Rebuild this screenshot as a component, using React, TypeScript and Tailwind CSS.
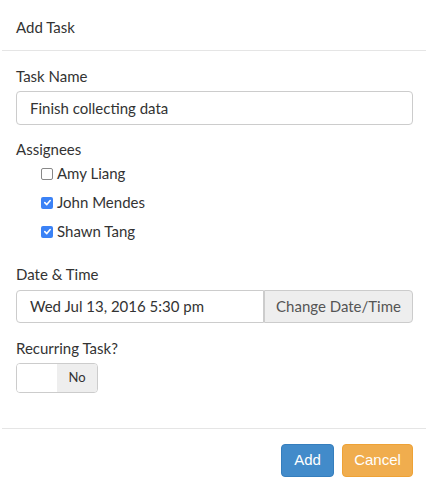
export default function App() {
  return (
    <div className="w-[426px] h-[494px] bg-white text-[#333] font-['Lato','Open_Sans',sans-serif] text-[15px]">
      <div className="h-[51px] pl-4 flex items-center border-b border-[#e5e5e5] ml-[2px]">
        <span className="-ml-[2px] pt-[4px]">Add Task</span>
      </div>

      <div className="px-4 pt-[15px]">
        <div className="mb-[5px] leading-[20px]">Task Name</div>
        <div className="h-[34px] w-[397px] border border-[#ccc] rounded-[4px] flex items-center px-[13px]">
          Finish collecting data
        </div>

        <div className="mt-[14px] leading-[20px]">Assignees</div>
        <div className="pl-[25px] flex flex-col">
          <Check label="Amy Liang" />
          <Check label="John Mendes" checked />
          <Check label="Shawn Tang" checked />
        </div>

        <div className="mt-[18px] leading-[20px]">Date &amp; Time</div>
        <div className="mt-[6px] h-[33px] w-[397px] flex">
          <div className="flex-1 border border-[#ccc] rounded-l-[4px] flex items-center px-[13px]">
            Wed Jul 13, 2016 5:30 pm
          </div>
          <div className="w-[149px] border border-[#ccc] bg-[#eee] rounded-r-[4px] flex items-center justify-center text-[#555]">
            Change Date/Time
          </div>
        </div>

        <div className="mt-[15px] leading-[20px]">Recurring Task?</div>
        <div className="mt-[5px] h-[30px] w-[82px] border border-[#ccc] rounded-[4px] flex overflow-hidden">
          <div className="w-[40px] bg-white"></div>
          <div className="flex-1 bg-[#eee] flex items-center justify-center text-[13px] text-[#333]">No</div>
        </div>
      </div>

      <div className="mt-[35px] border-t border-[#e5e5e5] ml-[2px] flex justify-end gap-[8px] pt-[15px] pr-[13px]">
        <button className="h-[33px] w-[53px] rounded-[4px] bg-[#428bca] border border-[#357ebd] text-white font-['Liberation_Sans',sans-serif] text-[15px]">
          Add
        </button>
        <button className="h-[33px] w-[71px] rounded-[4px] bg-[#f0ad4e] border border-[#eea236] text-white font-['Liberation_Sans',sans-serif] text-[15px]">
          Cancel
        </button>
      </div>
    </div>
  );
}

function Check({ label, checked }: { label: string; checked?: boolean }) {
  return (
    <label className="h-[29px] flex items-center gap-[4px]">
      {checked ? (
        <span className="w-[12px] h-[12px] rounded-[2px] bg-[#3b82f6] flex items-center justify-center">
          <svg width="9" height="9" viewBox="0 0 10 10">
            <path d="M2 5.2 L4.2 7.3 L8 2.8" stroke="white" strokeWidth="1.8" fill="none" strokeLinecap="round" strokeLinejoin="round" />
          </svg>
        </span>
      ) : (
        <span className="w-[12px] h-[12px] rounded-[2px] border border-[#888] bg-white"></span>
      )}
      <span>{label}</span>
    </label>
  );
}
